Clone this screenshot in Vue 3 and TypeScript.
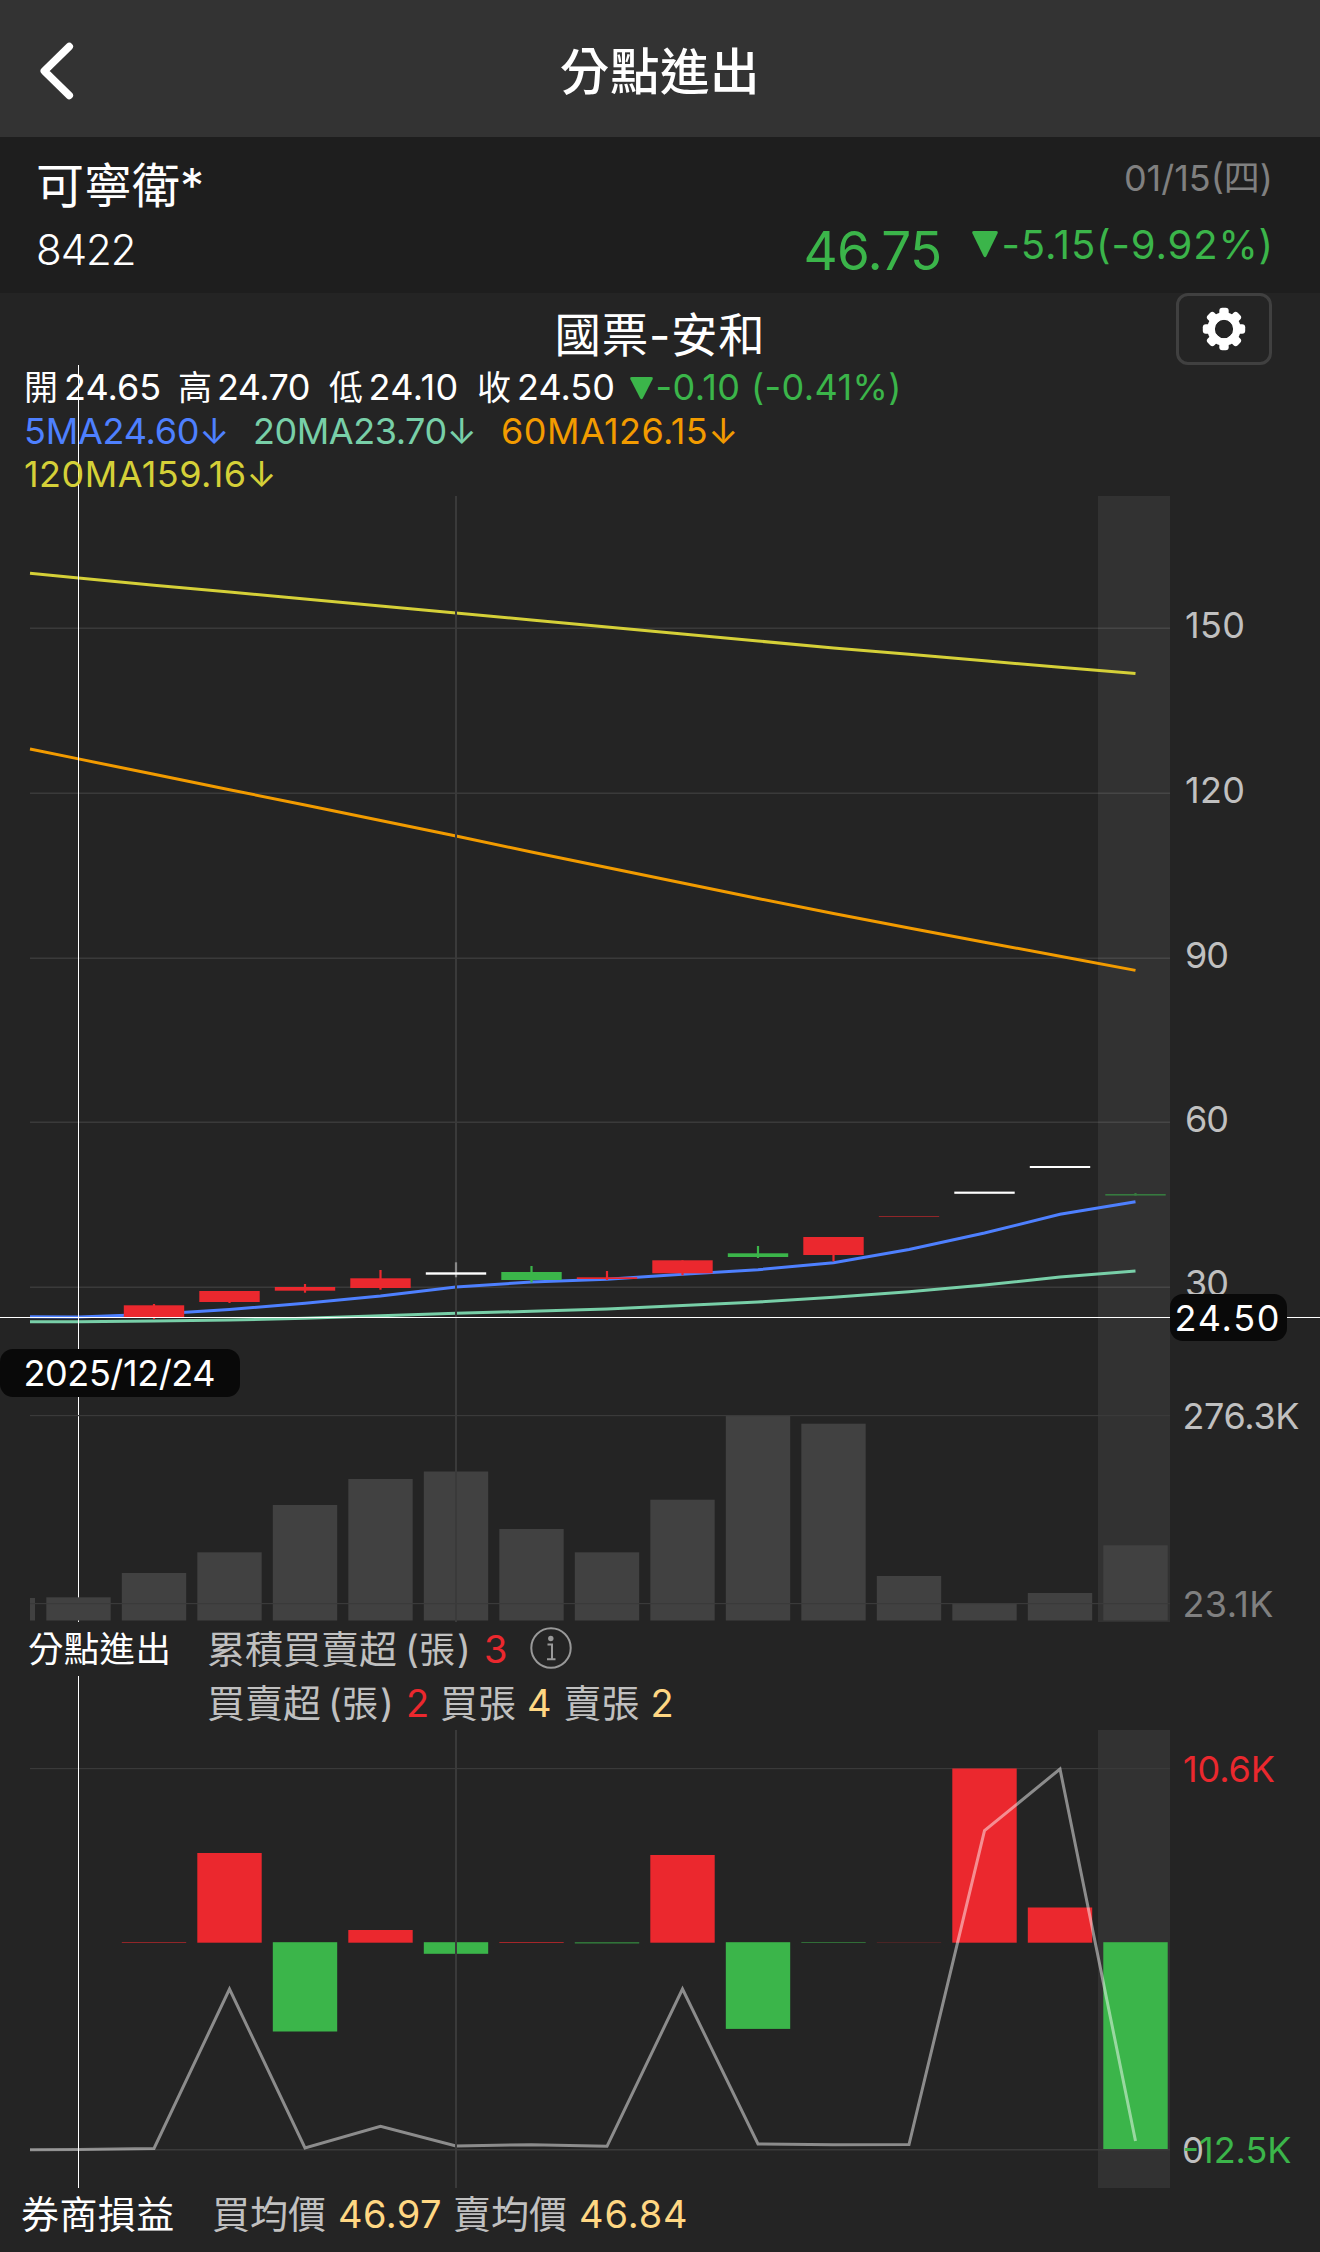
<script setup lang="ts">
interface Candle { top: number; bottom: number; high: number; low: number; tone: string; faint?: boolean }
interface Bar { slot: number; y: number; h: number; tone: string; opacity?: number }

const slotX = (i: number): number => 78.5 + i * 75.5

const path = (ys: number[], lead: number): string =>
  [`30,${lead}`, ...ys.map((y, i) => `${slotX(i)},${y}`)].join(' ')

const ma120 = path([578, 585.2, 592, 599, 606, 613, 620, 627, 634, 641, 648, 654.3, 660.8, 667.2, 673.6], 573.3)
const ma60 = path([758.9, 774.3, 789.7, 805, 820.5, 836, 852, 867.5, 883, 898.5, 913.5, 928, 942.2, 956.2, 970.4], 749)
const ma5 = path([1317, 1314.3, 1309.5, 1303.3, 1296, 1287, 1282, 1279.3, 1274.3, 1269.7, 1262.7, 1249.5, 1233, 1214.3, 1201.7], 1316.7)
const ma20 = path([1321.7, 1321, 1320, 1318.3, 1315.8, 1313.3, 1311.3, 1309, 1305.5, 1302, 1297.3, 1291.7, 1285, 1277, 1271], 1321.7)
const balance = path([2149.5, 2148.5, 1989, 2148, 2126.3, 2146, 2144.7, 2146.3, 1989, 2144, 2144.8, 2144.5, 1830.7, 1769, 2141], 2149.7)

const candles: Candle[] = [
  { top: 1305.3, bottom: 1317, high: 1304, low: 1319, tone: 'up' },
  { top: 1291, bottom: 1302, high: 1291, low: 1303, tone: 'up' },
  { top: 1287, bottom: 1290.7, high: 1284, low: 1292.7, tone: 'up' },
  { top: 1278.3, bottom: 1288, high: 1270, low: 1289.7, tone: 'up' },
  { top: 1272.3, bottom: 1274.7, high: 1262.3, low: 1277.3, tone: 'flat' },
  { top: 1272, bottom: 1280, high: 1266, low: 1282.5, tone: 'down' },
  { top: 1277.3, bottom: 1279, high: 1271, low: 1280, tone: 'up' },
  { top: 1260.3, bottom: 1273.3, high: 1260.3, low: 1275.3, tone: 'up' },
  { top: 1253.3, bottom: 1257, high: 1246, low: 1258, tone: 'down' },
  { top: 1237, bottom: 1255, high: 1237, low: 1261.3, tone: 'up' },
  { top: 1216, bottom: 1217, high: 1216, low: 1217, tone: 'up', faint: true },
  { top: 1191.6, bottom: 1193.8, high: 1192, low: 1193, tone: 'flat' },
  { top: 1166, bottom: 1168, high: 1166, low: 1168, tone: 'flat' },
  { top: 1194, bottom: 1195.6, high: 1193, low: 1195.6, tone: 'down', faint: true },
]

const volumes: number[] = [1597.3, 1573, 1552.3, 1505, 1479, 1471.5, 1529, 1552.3, 1499.7, 1416, 1423.7, 1576, 1603, 1593, 1545.3]

const trades: Bar[] = [
  { slot: 1, y: 1942, h: 1, tone: 'up', opacity: 0.55 },
  { slot: 2, y: 1853, h: 89.7, tone: 'up' },
  { slot: 3, y: 1942.2, h: 89.3, tone: 'down' },
  { slot: 4, y: 1930, h: 12.7, tone: 'up' },
  { slot: 5, y: 1942.2, h: 11.6, tone: 'down' },
  { slot: 6, y: 1942, h: 1, tone: 'up', opacity: 0.65 },
  { slot: 7, y: 1942, h: 1.6, tone: 'down', opacity: 0.55 },
  { slot: 8, y: 1855, h: 87.7, tone: 'up' },
  { slot: 9, y: 1942.2, h: 86.7, tone: 'down' },
  { slot: 10, y: 1942, h: 1, tone: 'down', opacity: 0.5 },
  { slot: 11, y: 1942, h: 1, tone: 'up', opacity: 0.2 },
  { slot: 12, y: 1768.5, h: 174.2, tone: 'up' },
  { slot: 13, y: 1907.5, h: 35.2, tone: 'up' },
  { slot: 14, y: 1942.2, h: 206.8, tone: 'down' },
]

const priceTicks = [
  { label: '150', line: 628, base: 637.5, w: 58 },
  { label: '120', line: 793, base: 802.5, w: 58 },
  { label: '90', line: 958, base: 967.5, w: 42 },
  { label: '60', line: 1122, base: 1132, w: 42 },
  { label: '30', line: 1287, base: 1296, w: 42 },
]
</script>

<template>
  <div class="screen">
    <header class="nav">
      <svg class="back" width="34" height="58" viewBox="0 0 34 58"><path d="M29.300 4.500 4.300 29 29.300 53.500" /></svg>
      <h1>分點進出</h1>
    </header>

    <section class="quote">
      <div class="quote-id">
        <div class="name">可寧衛*</div>
        <div class="code">8422</div>
      </div>
      <div class="quote-price">
        <div class="date">01/15(四)</div>
        <div class="price-row">
          <span class="last">46.75</span>
          <svg class="tri" width="26" height="27" viewBox="0 0 26 27"><path d="M2 0H24Q26.500 0 25.500 2.500L14.500 25Q13 27.500 11.500 25L.5 2.500Q-.5 0 2 0Z" /></svg>
          <span class="change">-5.15(-9.92%)</span>
        </div>
      </div>
    </section>

    <section class="panel">
      <div class="broker-row">
        <h2>國票-安和</h2>
        <button class="settings" aria-label="settings">
          <svg width="44" height="44" viewBox="-22 -22 44 44">
            <g class="teeth"><rect v-for="a in 8" :key="a" x="-4.700" y="-21.200" width="9.400" height="12" rx="3" :transform="`rotate(${a * 45})`" /></g>
            <circle class="ring" r="12.900" />
          </svg>
        </button>
      </div>

      <div class="legend">
        <div class="ohlc">
          <span class="cj">開</span><span class="n1">24.65</span>
          <span class="cj">高</span><span class="n2">24.70</span>
          <span class="cj">低</span><span class="n3">24.10</span>
          <span class="cj">收</span><span class="n4">24.50</span>
          <span class="down-text"><svg class="tri" width="23" height="23" viewBox="0 0 26 27" preserveAspectRatio="none"><path d="M2 0H24Q26.500 0 25.500 2.500L14.500 25Q13 27.500 11.500 25L.5 2.500Q-.5 0 2 0Z" /></svg></span>
          <span class="down-text n5">-0.10 (-0.41%)</span>
        </div>
        <div class="mas">
          <span class="m5">5MA24.60<i>↓</i></span><span class="m20">20MA23.70<i>↓</i></span><span class="m60">60MA126.15<i>↓</i></span>
        </div>
        <div class="mas"><span class="m120">120MA159.16<i>↓</i></span></div>
      </div>

      <svg class="chart" width="1320" height="1126" viewBox="0 496 1320 1126">
        <rect class="band" x="1098" y="496" width="72" height="1126" />
        <g class="grid">
          <rect v-for="t in priceTicks" :key="t.label" x="30" :y="t.line - 0.500" width="1140" height="1.500" />
        </g>
        <polyline class="line c120" :points="ma120" />
        <polyline class="line c60" :points="ma60" />
        <polyline class="line c5" :points="ma5" />
        <polyline class="line c20" :points="ma20" />
        <rect class="gridline" x="455" y="496" width="2" height="904" />
        <g v-for="(c, i) in candles" :key="i" :class="c.tone" :opacity="c.faint ? 0.55 : 1">
          <rect class="wick" :x="slotX(i + 1) - 1.100" :y="c.high" width="2.200" :height="c.low - c.high" />
          <rect :x="slotX(i + 1) - 30.200" :y="c.top" width="60.400" :height="c.bottom - c.top" />
        </g>
        <rect class="cross" x="78" y="496" width="1" height="1126" />
        <rect class="cross" x="0" y="1317" width="1320" height="1" />

        <rect class="vol" x="30" y="1598" width="5" height="22.500" />
        <rect v-for="(y, i) in volumes" :key="'v' + i" class="vol" :x="slotX(i) - 32.200" :y="y" width="64.400" :height="1620.500 - y" />
        <rect class="gridline" x="30" y="1415" width="1140" height="1.200" />
        <rect class="gridline" x="30" y="1603" width="1140" height="1.200" />
        <rect class="gridline" x="455" y="1400" width="2" height="222" />

        <text v-for="t in priceTicks" :key="'t' + t.label" class="tick" x="1185" :y="t.base" :textLength="t.w + 2">{{ t.label }}</text>
        <text class="tick" x="1182.500" y="1429" textLength="117">276.3K</text>
        <text class="tick dim" x="1182.500" y="1617" textLength="91">23.1K</text>

        <rect class="tag" x="1170" y="1294" width="117" height="47" rx="13" />
        <text class="tag-text" x="1174.500" y="1331" textLength="105">24.50</text>
        <rect class="tag" x="0" y="1349" width="240" height="48" rx="13" />
        <text class="tag-text" x="23.500" y="1386" textLength="192">2025/12/24</text>
      </svg>

      <div class="trade-legend">
        <div class="trade-title">分點進出</div>
        <div class="trade-rows">
          <div class="trade-row">
            <span class="k1">累積買賣超</span><span class="paren">(</span><span class="zh">張</span><span class="paren">)</span><span class="buy v1">3</span>
            <svg class="info" width="42" height="42" viewBox="0 0 42 42">
              <circle cx="21" cy="21" r="19.700" />
              <path class="serif" d="M17.500 17.500H22V32M17 32.300H25.500" />
              <circle class="dot" cx="20.800" cy="11.500" r="2.700" />
            </svg>
          </div>
          <div class="trade-row">
            <span class="k2">買賣超</span><span class="paren">(</span><span class="zh">張</span><span class="paren">)</span><span class="buy v2">2</span>
            <span class="k3">買張</span><span class="gold v3">4</span><span class="k3">賣張</span><span class="gold v3">2</span>
          </div>
        </div>
      </div>

      <svg class="chart" width="1320" height="458" viewBox="0 1730 1320 458">
        <rect class="band" x="1098" y="1730" width="72" height="458" />
        <rect class="gridline" x="30" y="1768" width="1140" height="1.200" />
        <rect class="gridline" x="30" y="2149" width="1140" height="1.500" />
        <rect v-for="b in trades" :key="b.slot" :class="b.tone" :opacity="b.opacity ?? 1" :x="slotX(b.slot) - 32.200" :y="b.y" width="64.400" :height="b.h" />
        <polyline class="line bal" :points="balance" />
        <rect class="gridline" x="455" y="1730" width="2" height="458" />
        <rect class="cross" x="78" y="1730" width="1" height="458" />
        <text class="tick up" x="1183" y="1781.500" textLength="92">10.6K</text>
        <text class="tick" x="1182" y="2163" textLength="22" lengthAdjust="spacingAndGlyphs">0</text>
        <text class="tick down" x="1182.500" y="2163" textLength="109">-12.5K</text>
      </svg>
    </section>

    <footer class="profit">
      <span class="p-title">券商損益</span>
      <span class="p-key">買均價</span><span class="gold p-val buy-avg">46.97</span>
      <span class="p-key">賣均價</span><span class="gold p-val sell-avg">46.84</span>
    </footer>
  </div>
</template>

<style>
html, body { background: #242424; }
</style>

<style scoped>
.screen { width: 1320px; height: 2252px; overflow: hidden; background: #242424; color: #fff; font-family: Inter, "Noto Sans CJK TC", sans-serif; font-size: 36px; white-space: nowrap; }
.nav { display: grid; grid-template-columns: 100px 1fr 100px; align-items: center; height: 137px; background: #333; }
.back { margin: 5px 0 0 39.500px; fill: none; stroke: #fff; stroke-width: 7.500; stroke-linecap: round; stroke-linejoin: round; }
h1 { margin: 6px 0 0; font-size: 49.500px; line-height: 60px; font-weight: 500; text-align: center; letter-spacing: 0.600px; }
.quote { display: flex; justify-content: space-between; height: 156px; padding: 0 47px 0 36px; background: #1e1e1e; }
.name { margin-top: 19px; font-size: 48px; line-height: 60px; font-weight: 400; }
.code { margin-top: 4px; font-size: 42px; line-height: 60px; font-weight: 300; letter-spacing: -1px; }
.quote-price { display: flex; flex-direction: column; align-items: flex-end; }
.date { margin-top: 19px; line-height: 44px; color: #808080; font-weight: 400; }
.price-row { display: flex; align-items: baseline; margin-top: 18px; line-height: 66px; color: #3bb54a; font-weight: 400; }
.last { font-size: 53px; margin-right: 30px; letter-spacing: -0.700px; }
.tri { fill: #3bb54a; }
.price-row .tri { position: relative; top: -12px; }
.change { position: relative; top: -11px; margin: 0 -1px 0 4px; font-size: 40px; letter-spacing: 0.850px; }
.broker-row { display: grid; grid-template-columns: 144px 1fr 96px; padding: 0 48px 0 0; height: 72px; }
h2 { grid-column: 2; margin: 12px 0 0; font-size: 46.500px; line-height: 60px; font-weight: 400; text-align: center; letter-spacing: 0.700px; }
.settings { display: grid; place-items: center; width: 96px; height: 72px; padding: 0; background: none; border: 3px solid #404040; border-radius: 12px; }
.teeth { fill: #fff; }
.ring { fill: none; stroke: #fff; stroke-width: 7.500; }
.legend { position: relative; height: 130px; padding: 1px 0 0 24px; }
.legend::before { content: ""; position: absolute; left: 78px; top: 0; width: 1px; height: 131px; background: #fff; }
.legend > div { position: relative; display: grid; align-items: baseline; line-height: 43.500px; font-weight: 400; }
.legend > .ohlc { grid-template-columns: 40px 114px 39px 112px 39.500px 108.500px 40px 113px 25.500px auto; }
.cj { font-size: 34px; }
.n2 { letter-spacing: -0.600px; } .n3 { letter-spacing: 0.400px; } .n5 { letter-spacing: 0.400px; }
.down-text { color: #3bb54a; }
.mas { grid-template-columns: 229px 248px auto; justify-content: start; }
.mas i { font-style: normal; }
.m5 { color: #4e80ff; letter-spacing: -0.250px; } .m20 { color: #78cfa8; letter-spacing: -0.450px; } .m60 { color: #f29b00; letter-spacing: 0.450px; } .m120 { color: #d5d038; letter-spacing: 0.450px; }
.chart { display: block; overflow: visible; }
.band { fill: #323232; }
.grid { fill: #fff; fill-opacity: 0.100; }
.gridline { fill: #3a3a3a; }
.cross { fill: #fff; }
.line { fill: none; stroke-width: 3; }
.c120 { stroke: #d5d038; } .c60 { stroke: #f29b00; } .c5 { stroke: #4e80ff; } .c20 { stroke: #78cfa8; } .bal { stroke: #fff; stroke-opacity: 0.480; }
.up { fill: #eb282e; } .down { fill: #3bb54a; } .flat { fill: #fff; } .flat .wick { fill: #888; }
.vol { fill: #414141; }
.tick { font-size: 36px; font-weight: 400; fill: #c0c0c0; }
.tick.dim { fill: #808080; } .tick.up { fill: #eb282e; } .tick.down { fill: #3bb54a; }
.tag { fill: #090909; } .tag-text { font-size: 36px; fill: #fff; }
.trade-legend { position: relative; display: flex; height: 108px; }
.trade-legend::before { content: ""; position: absolute; left: 78px; top: 54px; width: 1px; height: 54px; background: #fff; }
.trade-title { width: 179px; padding-left: 28px; line-height: 55px; font-size: 35.500px; font-weight: 400; letter-spacing: 0.300px; }
.trade-row { display: flex; align-items: baseline; height: 54px; line-height: 54px; font-size: 38px; color: #c0c0c0; font-weight: 400; }
.k1 { width: 198px; } .k2 { width: 121px; } .paren { width: 14px; } .zh { width: 38px; font-size: 36px; }
.buy { color: #eb282e; } .gold { color: #ffd783; }
.info { align-self: center; fill: none; stroke: #999; stroke-width: 2; position: relative; top: -1px; }
.info .dot { fill: #999; stroke: none; }
.profit { display: flex; align-items: baseline; padding-left: 21px; line-height: 52px; font-size: 38px; color: #c0c0c0; }
.p-title { width: 191px; color: #fff; letter-spacing: 0.400px; } .p-key { width: 126px; } .p-val { width: 115px; }
.buy-avg { letter-spacing: 0.400px; } .sell-avg { letter-spacing: 0.900px; }
.v1 { width: 46px; margin-left: 13px; } .v2 { width: 34px; margin-left: 12px; } .k3 { width: 87px; } .v3 { width: 36.500px; }
</style>
